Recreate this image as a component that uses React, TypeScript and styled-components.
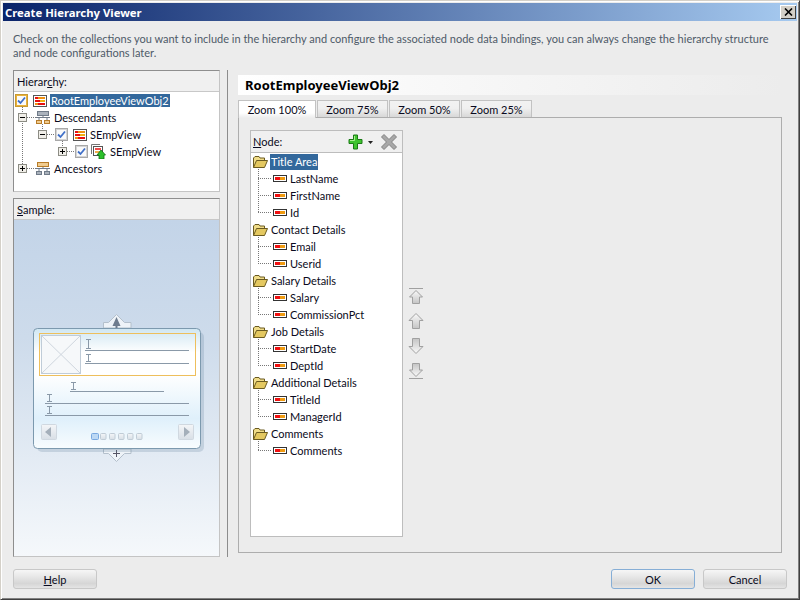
import React from 'react';
import styled, { createGlobalStyle } from 'styled-components';

const GlobalStyle = createGlobalStyle`
  html, body { margin: 0; padding: 0; }
  body { font-family: Lato, Roboto, sans-serif; font-size: 11px; color: #0a0a20; }
`;

const Window = styled.div`
  width: 800px;
  height: 600px;
  box-sizing: border-box;
  padding: 2px;
  background: #ececec;
  border: 1px solid #d4d0c8;
  border-right-color: #404040;
  border-bottom-color: #404040;
  box-shadow: inset 1px 1px 0 #fff, inset -1px -1px 0 #808080;
  display: flex;
  flex-direction: column;
`;

const TitleBar = styled.div`
  height: 18px;
  flex: none;
  display: flex;
  align-items: center;
  justify-content: space-between;
  padding: 0 1px 0 2px;
  background: linear-gradient(90deg, #0a246a, #a6caf0);
  color: #fff;
  font-family: "Noto Sans", sans-serif;
  font-weight: 700;
  font-size: 11.3px;
`;

const CloseButton = styled.div`
  width: 16px;
  height: 14px;
  background: #d4d0c8;
  box-shadow: inset 1px 1px 0 #fff, inset -1px -1px 0 #404040;
  display: flex;
  align-items: center;
  justify-content: center;
`;

const Description = styled.p`
  margin: 0;
  padding: 11px 10px 0;
  height: 28px;
  flex: none;
  line-height: 14px;
  color: #4e5a68;
  white-space: nowrap;
`;

const Content = styled.div`
  margin: 10px 15px 0 10px;
  height: 487px;
  flex: none;
  display: flex;
`;

const LeftColumn = styled.div`
  width: 207px;
  flex: none;
  display: flex;
  flex-direction: column;
  gap: 6px;
`;

const Panel = styled.div<{ $height?: number }>`
  box-sizing: border-box;
  height: ${(p) => (p.$height ? `${p.$height}px` : 'auto')};
  flex: ${(p) => (p.$height ? 'none' : '1')};
  border: 1px solid #c4c4c4;
  border-top-color: #8e8e8e;
  border-left-color: #8e8e8e;
  display: flex;
  flex-direction: column;
`;

const PanelHeader = styled.div`
  height: 21px;
  flex: none;
  box-sizing: border-box;
  display: flex;
  align-items: center;
  padding-left: 3px;
  background: #f0f0f0;
  border-bottom: 1px solid #c8c8c8;
`;

const Key = styled.span`
  text-decoration: underline;
`;

const Tree = styled.div`
  position: relative;
  flex: 1;
  background: #fff;
`;

const Guides = styled.svg`
  position: absolute;
  left: 0;
  top: 0;
  width: 100%;
  height: 100%;
  pointer-events: none;
`;

const TreeRow = styled.div<{ $indent: number }>`
  position: relative;
  height: 17px;
  display: flex;
  align-items: center;
  padding-left: ${(p) => p.$indent}px;
  white-space: nowrap;
`;

const Cell = styled.span<{ $ml?: number }>`
  display: flex;
  flex: none;
  margin-left: ${(p) => p.$ml ?? 0}px;
`;

const Label = styled.span<{ $selected?: boolean; $ml?: number; $band?: number }>`
  margin-left: ${(p) => p.$ml ?? 0}px;
  padding: 0 1px;
  line-height: ${(p) => p.$band ?? 14}px;
  background: ${(p) => (p.$selected ? '#33689c' : 'transparent')};
  color: ${(p) => (p.$selected ? '#fff' : 'inherit')};
`;

const Sample = styled.svg`
  display: block;
  flex: 1;
  width: 100%;
  min-height: 0;
`;

const Divider = styled.div`
  width: 1px;
  flex: none;
  margin: 0 10px 0 7px;
  background: #8c8c8c;
`;

const RightColumn = styled.div`
  flex: 1;
  min-width: 0;
  padding-top: 5px;
  display: flex;
  flex-direction: column;
`;

const ViewTitle = styled.div`
  height: 20px;
  flex: none;
  display: flex;
  align-items: center;
  padding-left: 7px;
  background: linear-gradient(90deg, #ffffff, #ececec);
  font-family: "Noto Sans", sans-serif;
  font-size: 13px;
  font-weight: 700;
  color: #000;
`;

const Tabs = styled.div`
  margin-top: 5px;
  height: 18px;
  flex: none;
  display: flex;
  position: relative;
  z-index: 1;
`;

const Tab = styled.div<{ $active?: boolean; $width: number }>`
  box-sizing: border-box;
  width: ${(p) => p.$width}px;
  height: ${(p) => (p.$active ? 18 : 17)}px;
  display: flex;
  align-items: center;
  justify-content: center;
  margin-right: 1px;
  border: 1px solid #c2c2c2;
  border-bottom: none;
  background: ${(p) =>
    p.$active
      ? 'linear-gradient(#fff, #fff 70%, #ececec)'
      : 'linear-gradient(#f2f2f2, #f0f0f0 45%, #d8d8d8)'};
`;

const TabPanel = styled.div`
  box-sizing: border-box;
  margin-top: -1px;
  height: 436px;
  flex: none;
  border: 1px solid #adadad;
  padding: 12px 0 0 11px;
  display: flex;
  align-items: flex-start;
`;

const NodePanel = styled.div`
  box-sizing: border-box;
  width: 153px;
  height: 407px;
  flex: none;
  border: 1px solid #bdbdbd;
  display: flex;
  flex-direction: column;
`;

const NodeHeader = styled.div`
  height: 22px;
  flex: none;
  box-sizing: border-box;
  display: flex;
  align-items: center;
  justify-content: space-between;
  padding: 0 5px 0 2px;
  background: #f0f0f0;
  border-bottom: 1px solid #bdbdbd;
`;

const NodeTools = styled.div`
  display: flex;
  align-items: center;
  gap: 7px;
`;

const MoveButtons = styled.div`
  height: 407px;
  margin-left: 5px;
  display: flex;
  flex-direction: column;
  justify-content: center;
  gap: 9px;
`;

const Footer = styled.div`
  margin: 12px 10px 0;
  display: flex;
  gap: 8px;
`;

const Button = styled.div<{ $focused?: boolean }>`
  box-sizing: border-box;
  width: 84px;
  height: 20px;
  display: flex;
  align-items: center;
  justify-content: center;
  border: 1px solid ${(p) => (p.$focused ? '#86aed6' : '#c8c8c8')};
  border-radius: 3px;
  background: linear-gradient(#f6f6f6, #e6e6e6 40%, #d6d6d6 75%, #e4e4e4);
`;

const Spacer = styled.div`
  flex: 1;
`;

const CheckBox = ({ focused }: { focused?: boolean }) => (
  <svg width="13" height="13" viewBox="0 0 13 13">
    <rect
      x="0.5"
      y="0.5"
      width="12"
      height="12"
      fill={focused ? '#e9b23c' : '#d4d4d4'}
      stroke={focused ? '#c99a30' : '#a8a8a8'}
    />
    <rect x="2" y="2" width="9" height="9" fill="#fafafa" />
    <path d="M3 6.5l2.5 2.5 4.5-5.5" fill="none" stroke="#3f6fc8" strokeWidth="1.8" />
  </svg>
);

const Expander = ({ open }: { open?: boolean }) => (
  <svg width="9" height="9" viewBox="0 0 9 9">
    <rect x="0.5" y="0.5" width="8" height="8" fill="#f0eee8" stroke="#8c8c84" />
    <path d={open ? 'M2 4.5h5' : 'M2 4.5h5M4.5 2v5'} stroke="#000" />
  </svg>
);

const ViewIcon = () => (
  <svg width="14" height="12" viewBox="0 0 14 12">
    <rect x="0.5" y="0.5" width="13" height="11" fill="#fff" stroke="#555" />
    <path d="M2 3h3" stroke="#e81010" strokeWidth="2" />
    <path d="M5 3h7" stroke="#f09010" strokeWidth="2" />
    <path d="M2 6h5" stroke="#e81010" strokeWidth="2" />
    <path d="M7 6h5" stroke="#f0b010" strokeWidth="2" />
    <path d="M2 9h3" stroke="#f09010" strokeWidth="2" />
    <path d="M5 9h7" stroke="#e81010" strokeWidth="2" />
  </svg>
);

const LinkedViewIcon = () => (
  <svg width="15" height="15" viewBox="0 0 15 15">
    <path d="M0.5 10V0.5H9" fill="none" stroke="#777" />
    <rect x="2.5" y="2.5" width="9" height="9" fill="#fff" stroke="#555" />
    <path d="M4 5h6" stroke="#e81010" strokeWidth="1.5" />
    <path d="M4 8h6" stroke="#f09010" strokeWidth="1.5" />
    <path d="M8 15v-4H6l4-5 4.5 5H13v4z" fill="#2cc02c" stroke="#107010" strokeWidth="0.8" />
  </svg>
);

const HierarchyIcon = ({ flipped }: { flipped?: boolean }) => {
  const grey = { fill: '#aab2bc', stroke: '#6f7a88' };
  const orange = { fill: '#f0cc90', stroke: '#b87c28' };
  const top = flipped ? orange : grey;
  const bottom = flipped ? grey : orange;
  return (
    <svg width="14" height="13" viewBox="0 0 14 13">
      <rect x="1.5" y="0.5" width="11" height="4" {...top} />
      <path d="M7 5v1M3 7v2M11 7v2" fill="none" stroke="#6f7a88" />
      <path d="M0 6.5h14" stroke="#6f7a88" />
      <rect x="0.5" y="9.5" width="5" height="3" {...bottom} />
      <rect x="8.5" y="9.5" width="5" height="3" {...bottom} />
    </svg>
  );
};

const FolderIcon = () => (
  <svg width="15" height="12" viewBox="0 0 15 12">
    <path d="M0.5 11.5V2L2 .5h4L7 2h4.5v2" fill="#f0dc88" stroke="#6a5a20" />
    <path d="M0.5 11.5L3.5 4.5h11l-3 7z" fill="#e4c860" stroke="#6a5a20" />
  </svg>
);

const AttributeIcon = () => (
  <svg width="14" height="7" viewBox="0 0 14 7">
    <rect x="0.5" y="0.5" width="13" height="6" fill="#fff" stroke="#333" />
    <rect x="2" y="2" width="5" height="3" fill="#f01010" />
    <rect x="7" y="2" width="5" height="3" fill="#f09a10" />
  </svg>
);

const MoveIcon = ({ down, bar }: { down?: boolean; bar?: boolean }) => (
  <svg width="16" height="16" viewBox="0 0 16 16">
    <defs>
      <linearGradient id="moveFill" x1="0" y1="0" x2="0" y2="1">
        <stop offset="0" stopColor="#fafafa" />
        <stop offset="1" stopColor="#c4c4c4" />
      </linearGradient>
    </defs>
    <g transform={down ? 'rotate(180 8 8)' : undefined}>
      {bar && <path d="M1 0.5h14" stroke="#a0a0a0" />}
      <path
        d={bar ? 'M8 2.5L14.5 9H11.5V15.5H4.5V9H1.5z' : 'M8 0.5L15 7.5H11.5V15.5H4.5V7.5H1z'}
        fill="url(#moveFill)"
        stroke="#a0a0a0"
      />
    </g>
  </svg>
);

const SampleDrawing = () => {
  const textLines = [
    { ix: 88, iy: 339, ih: 10, ly: 350, x1: 85, x2: 189 },
    { ix: 88, iy: 354, ih: 8, ly: 363, x1: 85, x2: 189 },
    { ix: 73, iy: 382, ih: 8, ly: 391, x1: 70, x2: 164 },
    { ix: 49, iy: 394, ih: 8, ly: 403, x1: 45, x2: 189 },
    { ix: 49, iy: 406, ih: 8, ly: 415, x1: 45, x2: 189 },
  ];
  return (
    <Sample viewBox="14 220 205 336" preserveAspectRatio="none">
      <defs>
        <linearGradient id="sampleBg" x1="0" y1="0" x2="0" y2="1">
          <stop offset="0" stopColor="#c3d4e8" />
          <stop offset="0.35" stopColor="#cddbeb" />
          <stop offset="1" stopColor="#f5f8fb" />
        </linearGradient>
        <linearGradient id="cardBg" x1="0" y1="0" x2="0" y2="1">
          <stop offset="0" stopColor="#cfe6f2" />
          <stop offset="0.2" stopColor="#ffffff" />
          <stop offset="0.38" stopColor="#ffffff" />
          <stop offset="0.75" stopColor="#dff0fb" />
          <stop offset="1" stopColor="#f8fcfe" />
        </linearGradient>
        <linearGradient id="slotBg" x1="0" y1="0" x2="0" y2="1">
          <stop offset="0" stopColor="#f4f6f8" />
          <stop offset="1" stopColor="#d8dfe6" />
        </linearGradient>
      </defs>
      <rect x="14" y="220" width="205" height="336" fill="url(#sampleBg)" />

      <path d="M103.5 328v-5.5h5l8-8 8 8h6.5v5.5z" fill="#eef3f8" stroke="#b4c0cc" />
      <path d="M116.5 317l4 9h-3v2h-2v-2h-3z" fill="#6e7c8e" />

      <path d="M103.5 449v4.5h5l8 8 8-8h6.5V449z" fill="#eef3f8" stroke="#b4c0cc" />
      <path d="M113 453.5h7M116.5 450v7" stroke="#556" />

      <rect x="37" y="332" width="167" height="120" rx="5" fill="#5d7a96" opacity="0.22" />
      <rect x="33.5" y="328.5" width="167" height="120" rx="4" fill="url(#cardBg)" stroke="#7c99ae" />
      <rect x="39.5" y="333.5" width="156" height="42" fill="none" stroke="#eebf5c" />

      <rect x="41.5" y="335.5" width="39" height="38" fill="#f6f8fa" stroke="#c0ccd8" />
      <path d="M42 336l38 37M80 336L42 373" stroke="#cfd6de" />

      {textLines.map((t) => (
        <g key={t.ly} stroke="#8a99a8">
          <path d={`M${t.ix - 2} ${t.iy + 0.5}h5M${t.ix - 2} ${t.iy + t.ih - 0.5}h5M${t.ix + 0.5} ${t.iy}v${t.ih}`} />
          <path d={`M${t.x1} ${t.ly + 0.5}H${t.x2}`} />
        </g>
      ))}

      <rect x="41.5" y="424.5" width="15" height="15" rx="1" fill="url(#slotBg)" stroke="#d0d8e0" />
      <path d="M45 432l6-5v10z" fill="#a4afba" />
      <rect x="178.5" y="424.5" width="15" height="15" rx="1" fill="url(#slotBg)" stroke="#d0d8e0" />
      <path d="M190 432l-6-5v10z" fill="#a4afba" />

      <rect x="91.5" y="433.5" width="7" height="6" rx="1" fill="#bcd8f4" stroke="#78a8e0" />
      {[100.5, 109.5, 118.5, 127.5, 136.5].map((x) => (
        <rect key={x} x={x} y="433.5" width="5.5" height="6" rx="1" fill="url(#slotBg)" stroke="#c0ccd6" />
      ))}
    </Sample>
  );
};

const hierarchyGuides = (
  <Guides>
    <g fill="none" stroke="#777" strokeDasharray="1 1">
      <path d="M8.5 15V77" />
      <path d="M13 25.5h9" />
      <path d="M13 76.5h9" />
      <path d="M28.5 32V43" />
      <path d="M33 42.5h8" />
      <path d="M48.5 49V60" />
      <path d="M53 59.5h8" />
    </g>
  </Guides>
);

const nodeGroups = [
  { title: 'Title Area', items: ['LastName', 'FirstName', 'Id'] },
  { title: 'Contact Details', items: ['Email', 'Userid'] },
  { title: 'Salary Details', items: ['Salary', 'CommissionPct'] },
  { title: 'Job Details', items: ['StartDate', 'DeptId'] },
  { title: 'Additional Details', items: ['TitleId', 'ManagerId'] },
  { title: 'Comments', items: ['Comments'] },
];

const nodeGuides = () => {
  let y = 0;
  const paths: string[] = [];
  nodeGroups.forEach((g) => {
    const start = y + 16;
    y += 17;
    g.items.forEach(() => {
      paths.push(`M7 ${y + 8.5}h14`);
      y += 17;
    });
    paths.push(`M7.5 ${start}V${y - 8}`);
  });
  return paths.join('');
};

const tabs = [
  { label: 'Zoom 100%', width: 78 },
  { label: 'Zoom 75%', width: 71 },
  { label: 'Zoom 50%', width: 71 },
  { label: 'Zoom 25%', width: 71 },
];

export default function App(): React.JSX.Element {
  return (
    <>
      <GlobalStyle />
      <Window>
        <TitleBar>
          Create Hierarchy Viewer
          <CloseButton>
            <svg width="9" height="8" viewBox="0 0 9 8">
              <path d="M1 0.5l7 7M8 0.5l-7 7" stroke="#000" strokeWidth="1.6" />
            </svg>
          </CloseButton>
        </TitleBar>
        <Description>
          Check on the collections you want to include in the hierarchy and configure the associated node data bindings, you can always change the hierarchy structure
          <br />
          and node configurations later.
        </Description>
        <Content>
          <LeftColumn>
            <Panel $height={122}>
              <PanelHeader>
                Hierar<Key>c</Key>hy:
              </PanelHeader>
              <Tree>
                {hierarchyGuides}
                <TreeRow $indent={1}>
                  <CheckBox focused />
                  <Cell $ml={5}><ViewIcon /></Cell>
                  <Label $selected $ml={3} $band={13}>RootEmployeeViewObj2</Label>
                </TreeRow>
                <TreeRow $indent={4}>
                  <Expander open />
                  <Cell $ml={9}><HierarchyIcon /></Cell>
                  <Label $ml={3}>Descendants</Label>
                </TreeRow>
                <TreeRow $indent={24}>
                  <Expander open />
                  <Cell $ml={8}><CheckBox /></Cell>
                  <Cell $ml={5}><ViewIcon /></Cell>
                  <Label $ml={2}>SEmpView</Label>
                </TreeRow>
                <TreeRow $indent={44}>
                  <Expander />
                  <Cell $ml={8}><CheckBox /></Cell>
                  <Cell $ml={3}><LinkedViewIcon /></Cell>
                  <Label $ml={3}>SEmpView</Label>
                </TreeRow>
                <TreeRow $indent={4}>
                  <Expander />
                  <Cell $ml={9}><HierarchyIcon flipped /></Cell>
                  <Label $ml={3}>Ancestors</Label>
                </TreeRow>
              </Tree>
            </Panel>
            <Panel>
              <PanelHeader>
                <Key>S</Key>ample:
              </PanelHeader>
              <SampleDrawing />
            </Panel>
          </LeftColumn>
          <Divider />
          <RightColumn>
            <ViewTitle>RootEmployeeViewObj2</ViewTitle>
            <Tabs>
              {tabs.map((t, i) => (
                <Tab key={t.label} $active={i === 0} $width={t.width}>
                  {t.label}
                </Tab>
              ))}
            </Tabs>
            <TabPanel>
              <NodePanel>
                <NodeHeader>
                  <span>
                    <Key>N</Key>ode:
                  </span>
                  <NodeTools>
                    <svg width="26" height="16" viewBox="0 0 26 16">
                      <path
                        d="M5.5 1h4v4.5H14v4H9.5V15h-4V9.5H1v-4h4.5z"
                        fill="#3fc42f"
                        stroke="#1a7a14"
                      />
                      <path d="M6.5 2v4.5H2" fill="none" stroke="#a8f090" />
                      <path d="M20 7h5l-2.5 3z" fill="#222" />
                    </svg>
                    <svg width="16" height="16" viewBox="0 0 16 16">
                      <path
                        d="M3 0.5L8 5.5 13 0.5 15.5 3 10.5 8l5 5-2.5 2.5-5-5-5 5L0.5 13l5-5-5-5z"
                        fill="#a8a8a8"
                        stroke="#808080"
                      />
                    </svg>
                  </NodeTools>
                </NodeHeader>
                <Tree>
                  <Guides>
                    <path d={nodeGuides()} fill="none" stroke="#777" strokeDasharray="1 1" />
                  </Guides>
                  {nodeGroups.map((g, i) => (
                    <React.Fragment key={g.title}>
                      <TreeRow $indent={2}>
                        <FolderIcon />
                        <Label $selected={i === 0} $ml={2} $band={16}>{g.title}</Label>
                      </TreeRow>
                      {g.items.map((item) => (
                        <TreeRow key={item} $indent={22}>
                          <AttributeIcon />
                          <Label $ml={2}>{item}</Label>
                        </TreeRow>
                      ))}
                    </React.Fragment>
                  ))}
                </Tree>
              </NodePanel>
              <MoveButtons>
                <MoveIcon bar />
                <MoveIcon />
                <MoveIcon down />
                <MoveIcon down bar />
              </MoveButtons>
            </TabPanel>
          </RightColumn>
        </Content>
        <Footer>
          <Button>
            <span>
              <Key>H</Key>elp
            </span>
          </Button>
          <Spacer />
          <Button $focused>OK</Button>
          <Button>Cancel</Button>
        </Footer>
      </Window>
    </>
  );
}
